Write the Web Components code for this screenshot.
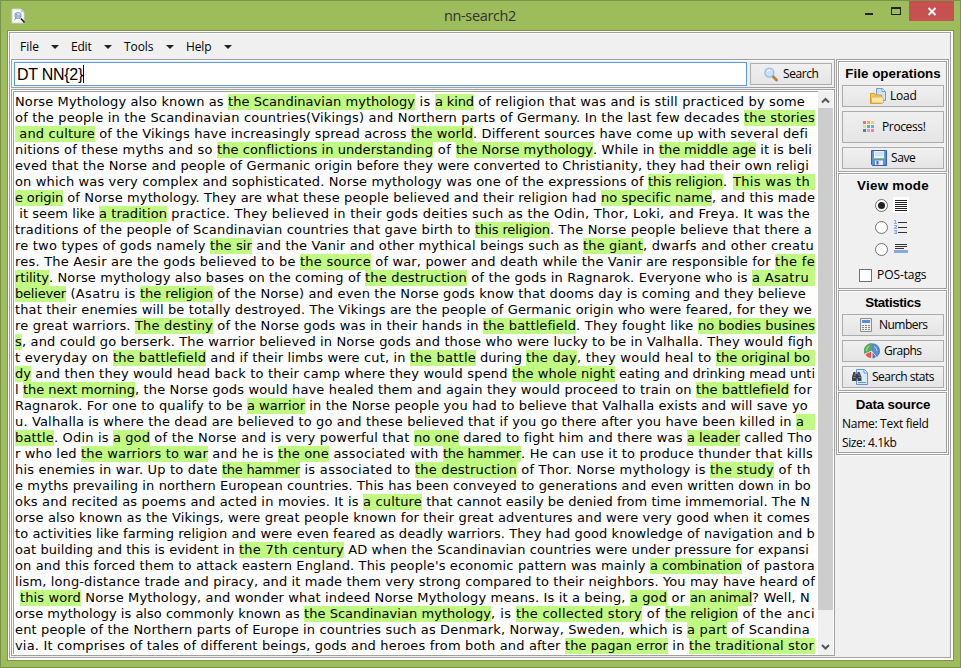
<!DOCTYPE html>
<html lang="en">
<head>
<meta charset="utf-8">
<title>nn-search2</title>
<style>
html, body { margin: 0; height: 100%; overflow: hidden; }
body { font: 12px/16px "Open Sans", "Noto Sans", sans-serif; color: #000; }
</style>
</head>
<body>
<app-window></app-window>
<script>
function define(name, html, ready) {
  const t = document.createElement('template');
  t.innerHTML = html;
  customElements.define(name, class extends HTMLElement {
    connectedCallback() {
      if (this.shadowRoot) return;
      this.attachShadow({ mode: 'open' }).appendChild(t.content.cloneNode(true));
      if (ready) ready.call(this, this.shadowRoot);
    }
  });
}

/* Text tracked so that it fills the width given in "w". */
define('fit-text', `<style>
:host{display:inline-block;flex:none;white-space:pre;vertical-align:top}
span{white-space:pre}
</style><span></span>`, function (root) {
  const s = root.querySelector('span'), w = +this.getAttribute('w');
  s.textContent = this.getAttribute('text');
  this.style.width = (this.getAttribute('box') || w) + 'px';
  const n = s.textContent.length, nat = s.getBoundingClientRect().width;
  s.style.letterSpacing = '0.001px';
  const base = s.getBoundingClientRect().width || nat;
  s.style.letterSpacing = ((w - base) / n).toFixed(4) + 'px';
});

define('menu-item', `<style>
:host{display:flex;align-items:center;flex:none;font-size:12px}
i{width:0;height:0;border:4px solid transparent;border-top-color:#222;border-bottom:0;margin-left:var(--gap,12px)}
</style><slot></slot><i></i>`);

define('tool-button', `<style>
:host{display:flex;align-items:center;box-sizing:border-box;height:22px;border:1px solid #acacac;background:linear-gradient(#f0f0f0,#e5e5e5);flex:none}
::slotted(svg){flex:none;display:block}
</style><slot></slot>`);

define('side-group', `<style>
:host{display:block;box-sizing:border-box;border:1px solid #a0a0a0;box-shadow:inset 1px 1px #fff,1px 1px #fff;background:#f0f0f0;flex:none;padding:0 2px 0 3px}
h2{margin:0;height:23px;font:bold 13.33px/23px "Liberation Sans",sans-serif;display:flex;justify-content:center}
</style><h2><slot name="title"></slot></h2><slot></slot>`);

define('radio-row', `<style>
:host{display:flex;align-items:center;height:22px;padding-left:33px;gap:5px}
b{box-sizing:border-box;width:13px;height:13px;border:1px solid #707070;border-radius:50%;background:#fff;display:grid;place-items:center}
:host([on]) b::after{content:"";width:7px;height:7px;border-radius:50%;background:#222}
::slotted(svg){display:block}
</style><b></b><slot></slot>`);

const LINES = [
 [["Norse Mythology also known as ",0,228],["the Scandinavian mythology",1,415],[" is ",0,435],["a kind",1,474],[" of religion that was and is still practiced by some",0,805]],
 [["of the people in the Scandinavian countries(Vikings) and Northern parts of Germany. In the last few decades ",0,744],["the stories",1,815]],
 [[" and culture",1,95],[" of the Vikings have increasingly spread across ",0,411],["the world",1,473],[". Different sources have come up with several defi",0,808]],
 [["nitions of these myths and so ",0,217],["the conflictions in understanding",1,433],[" of ",0,456],["the Norse mythology",1,593],[". While in ",0,659],["the middle age",1,756],[" it is beli",0,812]],
 [["eved that the Norse and people of Germanic origin before they were converted to Christianity, they had their own religi",0,809]],
 [["on which was very complex and sophisticated. Norse mythology was one of the expressions of ",0,648],["this religion",1,723],[". ",0,733],["This was th",1,810,815]],
 [["e origin",1,63],[" of Norse mythology. They are what these people believed and their religion had ",0,601],["no specific name",1,712],[", and this made",0,815]],
 [[" it seem like ",0,99],["a tradition",1,167],[" practice. They believed in their gods deities such as the Odin, Thor, Loki, and Freya. It was the",0,810]],
 [["traditions of the people of Scandinavian countries that gave birth to ",0,475],["this religion",1,550],[". The Norse people believe that there a",0,812]],
 [["re two types of gods namely ",0,210],["the sir",1,252],[" and the Vanir and other mythical beings such as ",0,583],["the giant",1,643],[", dwarfs and other creatu",0,814]],
 [["res. The Aesir are the gods believed to be ",0,300],["the source",1,371],[" of war, power and death while the Vanir are responsible for ",0,775],["the fe",1,815]],
 [["rtility",1,49],[". Norse mythology also bases on the coming of ",0,365],["the destruction",1,467],[" of the gods in Ragnarok. Everyone who is ",0,752],["a Asatru",1,809,815]],
 [["believer",1,66],[" (Asatru is ",0,140],["the religion",1,213],[" of the Norse) and even the Norse gods know that dooms day is coming and they believe",0,806]],
 [["that their enemies will be totally destroyed. The Vikings are the people of Germanic origin who were feared, for they we",0,812]],
 [["re great warriors. ",0,135],["The destiny",1,213],[" of the Norse gods was in their hands in ",0,483],["the battlefield",1,576],[". They fought like ",0,698],["no bodies busines",1,815]],
 [["s",1,22],[", and could go berserk. The warrior believed in Norse gods and those who were lucky to be in Valhalla. They would figh",0,813]],
 [["t everyday on ",0,113],["the battlefield",1,206],[" and if their limbs were cut, in ",0,410],["the battle",1,476],[" during ",0,526],["the day",1,577],[", they would heal to ",0,716],["the original bo",1,810,815]],
 [["dy",1,31],[" and then they would head back to their camp where they would spend ",0,512],["the whole night",1,615],[" eating and drinking mead unti",0,815]],
 [["l ",0,23],["the next morning",1,135],[", the Norse gods would have healed them and again they would proceed to train on ",0,696],["the battlefield",1,789],[" for",0,812]],
 [["Ragnarok. For one to qualify to be ",0,247],["a warrior",1,305],[" in the Norse people you had to believe that Valhalla exists and will save yo",0,808]],
 [["u. Valhalla is where the dead are believed to go and these believed that if you go there after you have been killed in ",0,796],["a",1,804,815]],
 [["battle",1,54],[". Odin is ",0,113],["a god",1,150],[" of the Norse and is very powerful that ",0,414],["no one",1,459],[" dared to fight him and there was ",0,687],["a leader",1,740],[" called Tho",0,812]],
 [["r who led ",0,81],["the warriors to war",1,208],[" and he is ",0,278],["the one",1,329],[" associated with ",0,443],["the hammer",1,521],[". He can use it to produce thunder that kills",0,813]],
 [["his enemies in war. Up to date ",0,222],["the hammer",1,300],[" is associated to ",0,415],["the destruction",1,517],[" of Thor. Norse mythology is ",0,710],["the study",1,774],[" of th",0,811]],
 [["e myths prevailing in northern European countries. This has been conveyed to generations and even written down in bo",0,811]],
 [["oks and recited as poems and acted in movies. It is ",0,363],["a culture",1,422],[" that cannot easily be denied from time immemorial. The N",0,810]],
 [["orse also known as the Vikings, were great people known for their great adventures and were very good when it comes",0,810]],
 [["to activities like farming religion and were even feared as deadly warriors. They had good knowledge of navigation and b",0,815]],
 [["oat building and this is evident in ",0,239],["the 7th century",1,344],[" AD when the Scandinavian countries were under pressure for expansi",0,809]],
 [["on and this forced them to attack eastern England. This people's economic pattern was mainly ",0,650],["a combination",1,742],[" of pastora",0,815]],
 [["lism, long-distance trade and piracy, and it made them very strong compared to their neighbors. You may have heard of",0,815]],
 [[" ",0,20],["this word",1,81],[" Norse Mythology, and wonder what indeed Norse Mythology means. Is it a being, ",0,630],["a god",1,667],[" or ",0,690],["an animal",1,752],["? Well, N",0,810]],
 [["orse mythology is also commonly known as ",0,304],["the Scandinavian mythology",1,491],[", is ",0,516],["the collected story",1,642],[" of ",0,665],["the religion",1,738],[" of the anci",0,815]],
 [["ent people of the Northern parts of Europe in countries such as Denmark, Norway, Sweden, which is ",0,687],["a part",1,727],[" of Scandina",0,810]],
 [["via. It comprises of tales of different beings, gods and heroes from both and after ",0,565],["the pagan error",1,668],[" in ",0,689],["the traditional stor",1,814,815]]
];

define('text-view', `<style>
:host{display:block;width:804px;padding-top:1px;background:#fff;font:13px/16px "DejaVu Sans",Verdana,sans-serif}
div{height:16px;padding-left:1px;white-space:nowrap;display:flex}
fit-text{height:16px}
.hit{background:#c0fa82}
</style>`, function (root) {
  for (const line of LINES) {
    const row = document.createElement('div');
    let x = 15;
    for (const [text, hit, end, edge] of line) {
      const f = document.createElement('fit-text');
      f.setAttribute('text', text);
      f.setAttribute('w', end - x);
      if (edge) f.setAttribute('box', edge - x);
      if (hit) f.className = 'hit';
      row.appendChild(f);
      x = end;
    }
    root.appendChild(row);
  }
});

define('scroll-bar', `<style>
:host{display:flex;flex-direction:column;width:15px;background:#f0f0f0}
svg{display:block;flex:none}
div{background:#cdcdcd;height:502px}
p{flex:1;margin:0}
</style>
<svg width="15" height="17"><path d="M4 11.5 7.5 8 11 11.5" fill="none" stroke="#555" stroke-width="2"/></svg>
<div></div><p></p>
<svg width="15" height="17"><path d="M4 7 7.5 10.5 11 7" fill="none" stroke="#555" stroke-width="2"/></svg>`);

define('app-window', `<style>
:host{display:flex;flex-direction:column;box-sizing:border-box;width:961px;height:668px;background:#9dbc5c;border:1px solid #7a924a;padding:0 6px 6px}
header{height:29px;flex:none;display:flex;align-items:flex-start;margin-right:-6px;font-size:14.5px;line-height:29px;color:#333}
header .app{margin:7px 0 0 4px;width:15px}
header .t{margin-left:418px;width:72px}
header .min{margin:12px 0 0 349px;width:8px;height:2px;background:#222}
header .max{box-sizing:border-box;margin:6px 0 0 18px;width:10px;height:8px;border:1px solid #222;border-top-width:2px}
header .x{margin-left:8px;width:45px;height:20px;background:#c75050}
header svg{display:block;flex:none}
.client{flex:1;min-height:0;border:1px solid #7d9744;background:#fff;padding:1px}
.inner{box-sizing:border-box;height:626px;width:942px;border:1px solid #a0a0a0;box-shadow:inset 1px 1px #fff;background:#f0f0f0;padding:0 1px;display:flex;flex-direction:column}
nav{display:flex;height:26px;flex:none;padding:1px 0 0 9px;box-sizing:border-box}
.cols{flex:1;display:flex;gap:1px}
main{width:824px;display:flex;flex-direction:column;gap:1px}
.bar{box-sizing:border-box;height:29px;border:1px solid #a0a0a0;box-shadow:inset 1px 1px #fff;display:flex;padding:2px;background:#f0f0f0;gap:3px}
.entry{box-sizing:border-box;width:733px;height:24px;border:1px solid #569de5;background:#fff;display:flex;padding-left:2px;font:16px/23px "Liberation Sans",sans-serif}
.entry i{width:1px;height:18px;background:#000;margin-top:2px}
.text{box-sizing:border-box;height:567px;border:1px solid #a0a0a0;background:#fff;padding:1px 0 0 1px;display:flex}
.pane{box-sizing:border-box;width:805px;height:563px;border:1px solid #a0a0a0;border-width:1px 0 0 1px;overflow:hidden;padding-top:1px;flex:none}
.bar tool-button{width:82px;margin-top:1px;padding-left:13px;gap:5px}
aside{box-sizing:border-box;width:113px;height:396px;border:1px solid #a0a0a0;background:#fff;box-shadow:1px 1px #fff;padding:1px;display:flex;flex-direction:column;gap:1px;flex:none}
.b{width:102px;margin-bottom:4px}
.radios{margin-top:-3px}
.check{display:flex;align-items:center;padding-left:17px;gap:5px;margin-top:7px}
.check i{box-sizing:border-box;width:13px;height:13px;border:1px solid #707070;background:#fff}
.info{height:19px}
</style>
<header>
 <svg class="app" width="15" height="16" viewBox="0 0 15 16"><path d="M1 1h9l3 3v11H1z" fill="#fbfbfb" stroke="#d0d5d0" stroke-width=".8"/><path d="M10 1v3h3" fill="#ddd" stroke="#bbb" stroke-width=".6"/><circle cx="7" cy="7.5" r="3" fill="#c8dcf0" stroke="#8fa9c4" stroke-width="1.2"/><path d="M3.500 12l2-3m3 1.500 1-2M5 8h4M4 5l2 2" stroke="#7d99b5" fill="none"/><path d="m10 10.5 3.5 4" stroke="#222" stroke-width="1.7"/></svg>
 <fit-text class="t" w="72" text="nn-search2"></fit-text>
 <div class="min"></div><div class="max"></div>
 <svg class="x" width="45" height="20"><path d="m19.5 7 7 7m0-7-7 7" stroke="#fff" stroke-width="1.8"/></svg>
</header>
<div class="client"><div class="inner">
 <nav>
  <menu-item><fit-text w="19" text="File"></fit-text></menu-item>
  <menu-item style="margin-left:12px"><fit-text w="20.5" text="Edit"></fit-text></menu-item>
  <menu-item style="margin-left:12.5px"><fit-text w="29.5" text="Tools"></fit-text></menu-item>
  <menu-item style="margin-left:12.5px"><fit-text w="25.5" text="Help"></fit-text></menu-item>
 </nav>
 <div class="cols">
  <main>
   <div class="bar">
    <div class="entry"><fit-text w="66" text="DT NN{2}"></fit-text><i></i></div>
    <tool-button>
     <svg width="14" height="15" viewBox="0 0 14 15"><path d="m8.5 9 4 4" stroke="#b98445" stroke-width="3" stroke-linecap="round"/><path d="m8.5 8.5 1.5 1.5" stroke="#888" stroke-width="2"/><circle cx="5.3" cy="5.6" r="4.5" fill="#c9e2fa" stroke="#9abce0" stroke-width="1.3"/><path d="M3 5a3 3 0 0 1 3-2" stroke="#fff" fill="none"/></svg>
     <fit-text w="35.5" text="Search"></fit-text>
    </tool-button>
   </div>
   <div class="text"><div class="pane"><text-view></text-view></div><scroll-bar></scroll-bar></div>
  </main>
  <aside>
   <side-group style="height:111px"><fit-text slot="title" w="95.5" text="File operations"></fit-text>
    <tool-button class="b" style="padding-left:27px;gap:4px"><svg width="16" height="16" viewBox="0 0 16 16"><path d="M6.5.5h6l3 3v9h-9z" fill="#cfe4fb" stroke="#6d9bd4"/><path d="M12 .5v3h3.500" fill="#fff" stroke="#6d9bd4"/><path d="M.5 5.500h4l1 1.500h6v8.500h-11z" fill="#f4c95c" stroke="#d79a2b"/><path d="M1.500 10.500l1-1.500h10l1 1.500v4.500h-12z" fill="#fbe9a8" stroke="#dda843" stroke-width=".8"/></svg><fit-text w="26.500" text="Load"></fit-text></tool-button>
    <tool-button class="b" style="height:32px;padding-left:20px;gap:7px"><svg width="12" height="12"><path d="M0 0h3v3H0z" fill="#f07070"/><path d="M4 0h3v3H4z" fill="#fba070"/><path d="M8 0h3v3H8z" fill="#f3d25c"/><path d="M0 4h3v3H0z" fill="#cbe3a4"/><path d="M4 4h3v3H4z" fill="#55c45e"/><path d="M8 4h3v3H8z" fill="#65acea"/><path d="M0 8h3v3H0z" fill="#5b78b0"/><path d="M4 8h3v3H4z" fill="#dc9add"/><path d="M8 8h3v3H8z" fill="#f976b2"/></svg><fit-text w="43.500" text="Process!"></fit-text></tool-button>
    <tool-button class="b" style="padding-left:28px;gap:4px"><svg width="16" height="16" viewBox="0 0 16 16"><path d="M.5.5h15v15h-14l-1-1z" fill="#5b92dd" stroke="#2f62b5"/><path d="M3 1h10v7H3z" fill="#eef4fc"/><path d="M4 3h8M4 5h8" stroke="#b9cbe3"/><path d="M2 8.500h12" stroke="#8dc06a"/><path d="M4 10.500h8V15H4z" fill="#eee"/><path d="M5.500 11h2v3.500h-2z" fill="#3567b2"/></svg><fit-text w="24.500" text="Save"></fit-text></tool-button>
   </side-group>
   <side-group style="height:116px"><fit-text slot="title" w="72" text="View mode"></fit-text>
    <div class="radios">
    <radio-row on><svg width="16" height="16"><path d="M0 0h16v16H0z" fill="#fff"/><path d="M2 3.500h12m-12 2h12m-12 2h12m-12 2h12m-12 2h12m-12 2h12" stroke="#222"/></svg></radio-row>
    <radio-row><svg width="16" height="16"><g fill="none" stroke="#85afe6" stroke-width="1.100"><path d="M1 1.500h1.500v3M1 4.500h3M1 6.500h2.500v1.500h-1l-1 1.500H4M1 11.500h2.500v3H1m.5-1.500h2"/></g><path d="M5 3.500h9m-9 5h9m-9 5h9" stroke="#333"/></svg></radio-row>
    <radio-row><svg width="16" height="16"><path d="M2 3.500h12m-12 2h12m-12 2h9" stroke="#333"/><path d="M1 9h14v3H1z" fill="#7faae2"/></svg></radio-row>
    </div>
    <div class="check"><i></i><fit-text w="49.500" text="POS-tags"></fit-text></div>
   </side-group>
   <side-group style="height:101px"><fit-text slot="title" w="55.500" text="Statistics"></fit-text>
    <tool-button class="b" style="padding-left:17px;gap:7px"><svg width="12" height="14"><path d="M.5.5h11v13H.5z" fill="#eee" stroke="#8d8d8d"/><path d="M2 2h8v3H2z" fill="#5a8dd6"/><path d="M2 7.500h2m1 0h2m1 0h2M2 9.500h2m1 0h2m1 0h2M2 11.500h2m1 0h2m1 0h2" stroke="#888"/></svg><fit-text w="48.500" text="Numbers"></fit-text></tool-button>
    <tool-button class="b" style="padding-left:21px;gap:4px"><svg width="16" height="16" viewBox="0 0 16 16"><path d="M7.500 8V.500A7.500 7.500 0 0 0 .6 10.500z" fill="#52b05a" stroke="#2f8a42" stroke-width=".6"/><path d="M7.500 8 .8 11A7.300 7.300 0 0 0 7.500 15.500z" fill="#ef5350" stroke="#fff" stroke-width=".7"/><path d="M8.500 8V.700A7.300 7.300 0 0 1 13 13.600z" fill="#5790da" stroke="#2c63af" stroke-width=".6"/><path d="M8.500 9.500v5.900A7 7 0 0 0 12 14z" fill="#4a79bd"/><path d="M2.500 8a5 5 0 0 1 3-5M10 3.500a5 5 0 0 1 3 4.500" stroke="#fff" stroke-opacity=".6" fill="none"/></svg><fit-text w="37.500" text="Graphs"></fit-text></tool-button>
    <tool-button class="b" style="padding-left:9px;gap:4px"><svg width="16" height="16" viewBox="0 0 16 16"><path d="M4.500.5h8l3 3v12h-11z" fill="#d9ecff" stroke="#5b95d8"/><path d="M12 .500v3.500h3.500M6 13.500h8" fill="#fff" stroke="#5b95d8"/><path d="M1.500 3h2v2h2V3h2l2 5v4h-4V9.500h-1V12H0V8z" fill="#3b3f46"/><path d="M1 8.500h2.500m3 0H9M3 5v2m4-2v2" stroke="#888"/></svg><fit-text w="62" text="Search stats"></fit-text></tool-button>
   </side-group>
   <side-group style="height:61px"><fit-text slot="title" w="74.500" text="Data source"></fit-text>
    <div class="info"><fit-text w="86.500" text="Name: Text field"></fit-text></div>
    <div class="info"><fit-text w="54.500" text="Size: 4.1kb"></fit-text></div>
   </side-group>
  </aside>
 </div>
</div></div>`);
</script>
</body>
</html>
